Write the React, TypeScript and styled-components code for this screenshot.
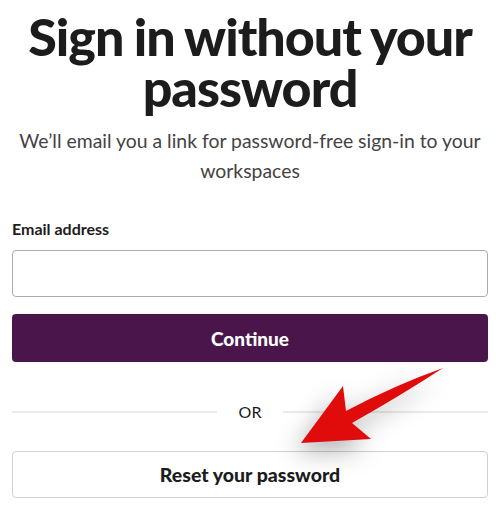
import React from "react";
import styled, { createGlobalStyle } from "styled-components";

const GlobalStyle = createGlobalStyle`
  html, body {
    margin: 0;
    padding: 0;
    background: #ffffff;
  }
  body {
    font-family: Lato, "Noto Sans", sans-serif;
    color: #1d1c1d;
  }
`;

const Page = styled.div`
  position: relative;
  width: 500px;
  height: 520px;
  overflow: hidden;
  box-sizing: border-box;
  padding: 11px 12px 0;
  display: flex;
  flex-direction: column;
`;

const Title = styled.h1`
  margin: 0;
  font-size: 52px;
  line-height: 51px;
  font-weight: 900;
  letter-spacing: -1px;
  word-spacing: -1px;
  text-align: center;
  color: #1d1c1d;
`;

const Lead = styled.p`
  margin: 13px 0 0;
  font-size: 19.4px;
  line-height: 30px;
  text-align: center;
  color: #454245;
`;

const Form = styled.form`
  margin-top: 32px;
  display: flex;
  flex-direction: column;
`;

const Label = styled.label`
  font-size: 16px;
  line-height: 22px;
  font-weight: 700;
  color: #1d1c1d;
  margin-bottom: 10px;
`;

const Input = styled.input`
  box-sizing: border-box;
  height: 47px;
  border: 1px solid #acacac;
  border-radius: 4px;
  padding: 0 12px;
  font: inherit;
  font-size: 18px;
  outline: none;
`;

const Button = styled.button<{ $primary?: boolean }>`
  box-sizing: border-box;
  height: ${(p) => (p.$primary ? "48px" : "47px")};
  width: 100%;
  border-radius: 4px;
  font-family: Lato, "Noto Sans", sans-serif;
  font-weight: 900;
  font-size: ${(p) => (p.$primary ? "19px" : "19.5px")};
  cursor: pointer;
  border: ${(p) => (p.$primary ? "none" : "1px solid #d1d1d1")};
  background: ${(p) => (p.$primary ? "#4a154b" : "#ffffff")};
  color: ${(p) => (p.$primary ? "#ffffff" : "#1d1c1d")};
`;

const PrimaryRow = styled.div`
  margin-top: 17px;
`;

const Divider = styled.div`
  margin: 40px 0 30px;
  display: flex;
  align-items: center;
  gap: 22px;
  font-size: 16px;
  color: #1d1c1d;

  &::before,
  &::after {
    content: "";
    flex: 1;
    height: 2px;
    background: #ebeaeb;
  }
`;

const Arrow = styled.svg`
  position: absolute;
  left: 0;
  top: 0;
  pointer-events: none;
  filter: drop-shadow(-6px 10px 12px rgba(0, 0, 0, 0.3));
`;

export default function App() {
  return (
    <>
      <GlobalStyle />
      <Page>
        <Title>Sign in without your password</Title>
        <Lead>We’ll email you a link for password-free sign-in to your workspaces</Lead>
        <Form onSubmit={(e) => e.preventDefault()}>
          <Label htmlFor="email">Email address</Label>
          <Input id="email" type="email" />
          <PrimaryRow>
            <Button $primary type="submit">Continue</Button>
          </PrimaryRow>
        </Form>
        <Divider>OR</Divider>
        <Button type="button">Reset your password</Button>
        <Arrow width="500" height="520" viewBox="0 0 500 520">
          <path
            d="M301 443 L343 386 L346 411 Q395 385 443 368 Q400 396 352 423 L371 439 Z"
            fill="#e00c0c"
          />
        </Arrow>
      </Page>
    </>
  );
}
